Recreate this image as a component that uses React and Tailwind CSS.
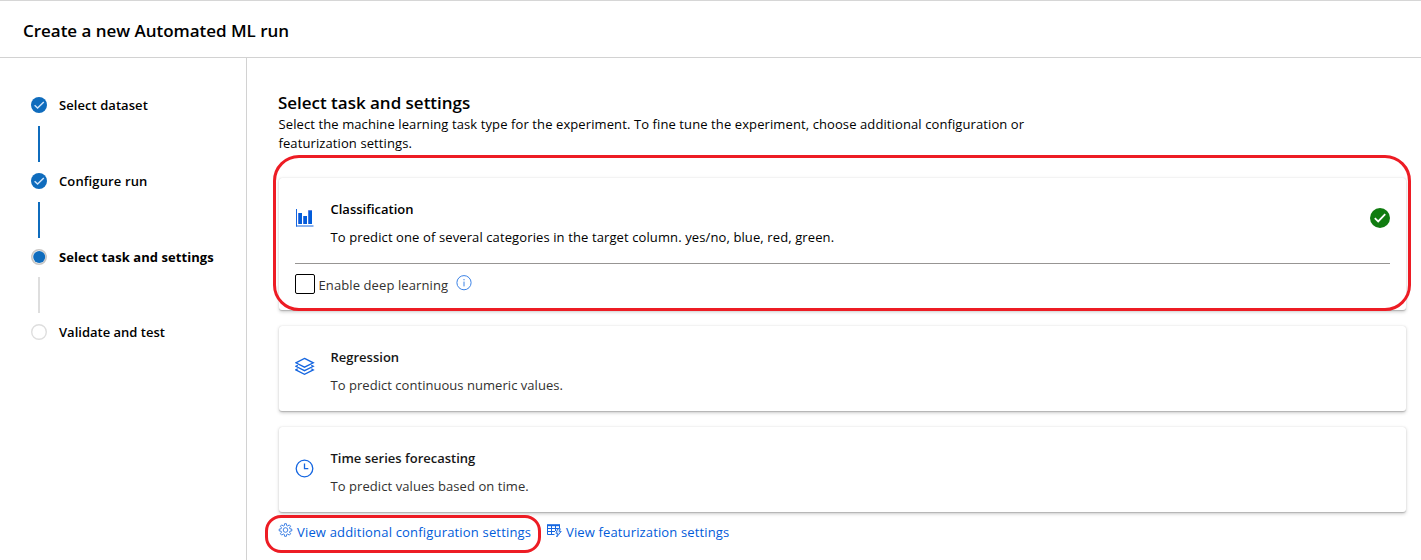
import React from "react";

const RED = "pointer-events-none absolute border-[3px] border-[#ed1c24]";

function StepDone() {
  return (
    <svg className="block h-4 w-4" viewBox="0 0 16 16">
      <circle cx="8" cy="8" r="8" fill="#0f6cbd" />
      <path d="M3.6 8.2 6.6 11 12.8 5" fill="none" stroke="#cfe4fa" strokeWidth="1.5" />
    </svg>
  );
}

function StepCurrent() {
  return (
    <svg className="block h-4 w-4" viewBox="0 0 16 16">
      <circle cx="8" cy="8" r="7.2" fill="#fff" stroke="#c8c6c4" strokeWidth="1.6" />
      <circle cx="8.2" cy="8" r="6" fill="#0f6cbd" />
    </svg>
  );
}

function StepPending() {
  return (
    <svg className="block h-4 w-4" viewBox="0 0 16 16">
      <circle cx="8" cy="8" r="7.3" fill="#fff" stroke="#dedede" strokeWidth="1.4" />
    </svg>
  );
}

function Step({ icon, label, className }) {
  return (
    <div className="flex h-4 items-center gap-3">
      {icon}
      <span className={"whitespace-nowrap text-[13px] leading-4 " + className}>{label}</span>
    </div>
  );
}

function BarsIcon() {
  return (
    <svg className="block h-5 w-5" viewBox="0 0 20 20">
      <path d="M1.5 1v17.5M1 18h17.5" fill="none" stroke="#1566e0" />
      <path d="M3 5h4v11H3zM8 8h4v8H8zM13 2h4v14h-4z" fill="#b7a5e8" />
      <path d="M3.4 5H7v11H3.4zM8.4 8H12v8H8.4zM13.4 2.4H17V16h-3.6z" fill="#015cda" />
    </svg>
  );
}

function LayersIcon() {
  return (
    <svg className="block h-5 w-5" viewBox="0 0 20 20" fill="none" stroke="#1566e0" strokeWidth="1.3">
      <path d="M9.5 1.4 18.3 5.8 9.5 10.2.8 5.8z" />
      <path d="M2.8 8.2.8 9.3l8.7 4.4 8.8-4.4-2-1.1" />
      <path d="M2.8 11.8.8 12.9l8.7 4.4 8.8-4.4-2-1.1" />
    </svg>
  );
}

function ClockIcon() {
  return (
    <svg className="block h-5 w-5" viewBox="0 0 20 20" fill="none" stroke="#1566e0" strokeWidth="1.3">
      <circle cx="9.5" cy="9.5" r="8.3" />
      <path d="M9.5 4.6v5.1h3.8" />
    </svg>
  );
}

function InfoIcon() {
  return (
    <svg className="block h-4 w-4" viewBox="0 0 16 16" fill="none" stroke="#3b82e6">
      <circle cx="8" cy="7.7" r="7.1" />
      <path d="M8 6.6v4.8M8 4v1.3" />
    </svg>
  );
}

function GearIcon() {
  return (
    <svg className="block h-[15px] w-[15px]" viewBox="0 0 15 15" fill="none" stroke="#2a74e2" strokeWidth=".9">
      <path d="M6.3 2.6 6.6.7h1.8l.3 1.9 1 .4 1.6-1.1 1.3 1.3-1.1 1.6.4 1 1.9.3v1.8l-1.9.3-.4 1 1.1 1.6-1.3 1.3-1.6-1.1-1 .4-.3 1.9H6.6l-.3-1.9-1-.4-1.6 1.1-1.3-1.3 1.1-1.6-.4-1L1.2 7.9V6.1l1.9-.3.4-1-1.1-1.6 1.3-1.3L5.3 3z" />
      <circle cx="7.5" cy="7" r="2.3" />
    </svg>
  );
}

function TableFlashIcon() {
  return (
    <svg className="block h-[14px] w-[15px]" viewBox="0 0 15 14" fill="none" stroke="#1566e0">
      <path d="M0 1.2h13" strokeWidth="2" />
      <path d="M.5 1v9.5h7M0 4.5h12.5M0 7.5h8M4.5 1v9.5M8.5 1v6M12.5 1v3.5" />
      <path d="M10.7 4.8h2.6l-1 2.6h1.9l-4.5 5.6 1-3.7H8.9z" strokeWidth=".9" fill="#dbe8fb" />
    </svg>
  );
}

function CheckBadge() {
  return (
    <svg className="block h-5 w-5" viewBox="0 0 20 20">
      <circle cx="10" cy="10" r="10" fill="#107c10" />
      <path d="M4.8 10.2 8.2 13.4 15.2 6.2" fill="none" stroke="#fff" strokeWidth="1.8" />
    </svg>
  );
}

const CARD = "rounded-[3px] bg-white shadow-[0_1.6px_3.6px_rgba(0,0,0,0.2),0_0.3px_0.9px_rgba(0,0,0,0.16)]";

function TaskHead({ icon, iconClass, title, titleClass, text, textClass, selected }) {
  return (
    <div className="flex h-[85px] items-center pl-4 pr-4">
      <div className={"w-9 shrink-0 " + iconClass}>{icon}</div>
      <div className="-ml-[0.5px] flex flex-1 flex-col gap-2 pt-[5px]">
        <div className={"whitespace-nowrap text-[13px] font-semibold leading-5 " + titleClass}>{title}</div>
        <div className={"whitespace-nowrap text-[13px] leading-5 " + textClass}>{text}</div>
      </div>
      {selected && <div className="mt-[-5px]"><CheckBadge /></div>}
    </div>
  );
}

export default function App() {
  return (
    <div className="flex h-[560px] w-[1421px] flex-col overflow-hidden border-t border-[#d6d6d6] bg-white font-['Open_Sans','Noto_Sans',sans-serif] text-[13px] text-black">
      <header className="flex h-[57px] shrink-0 items-center border-b border-[#d2d2d2] pl-[23px]">
        <h1 className="mt-[3px] whitespace-nowrap text-[17px] font-semibold leading-6 tracking-[-0.03px]">Create a new Automated ML run</h1>
      </header>
      <div className="flex flex-1">
        <nav className="flex w-[247px] shrink-0 flex-col border-r border-[#d2d2d2] pl-[31px] pt-[39px]">
          <Step icon={<StepDone />} label="Select dataset" className="font-semibold tracking-[0.06px]" />
          <div className="mb-[11px] ml-[7px] mt-[13px] h-9 w-0.5 bg-[#0f6cbd]" />
          <Step icon={<StepDone />} label="Configure run" className="font-semibold tracking-[0.12px]" />
          <div className="mb-[11px] ml-[7px] mt-[13px] h-9 w-0.5 bg-[#0f6cbd]" />
          <Step icon={<StepCurrent />} label="Select task and settings" className="font-bold tracking-[0.06px]" />
          <div className="mb-[11px] ml-[7px] mt-3 h-9 w-0.5 bg-[#dedede]" />
          <Step icon={<StepPending />} label="Validate and test" className="font-semibold" />
        </nav>
        <main className="flex flex-1 flex-col pl-8 pr-[15px] pt-[33px]">
          <h2 className="-ml-px whitespace-nowrap text-[17px] font-semibold leading-6 tracking-[-0.02px]">Select task and settings</h2>
          <p className="-ml-[0.5px] whitespace-nowrap text-[13px] leading-[19px] tracking-[0.1px]">
            Select the machine learning task type for the experiment. To fine tune the experiment, choose additional configuration or
            <br />
            featurization settings.
          </p>
          <div className="mt-[25px] flex flex-col gap-4">
            <section className={"relative h-[132px] " + CARD}>
              <TaskHead icon={<BarsIcon />} iconClass="mt-[-5px]" title="Classification" titleClass="" text="To predict one of several categories in the target column. yes/no, blue, red, green." textClass="tracking-[0.11px]" selected />
              <div className="mx-4 h-px bg-[#979593]" />
              <div className="flex h-[41px] items-center pl-4">
                <span className="mb-0.5 h-5 w-5 rounded-[2px] border border-black" />
                <span className="ml-[3.5px] whitespace-nowrap leading-5 tracking-[0.1px] text-[#323130]">Enable deep learning</span>
                <span className="mb-1 ml-[7.5px]"><InfoIcon /></span>
              </div>
              <div className={RED + " -left-1.5 -right-[5px] -top-[23px] h-[156px] rounded-[26px]"} />
            </section>
            <section className={CARD}>
              <TaskHead icon={<LayersIcon />} iconClass="-mt-1" title="Regression" titleClass="text-[#171717]" text="To predict continuous numeric values." textClass="text-[#323130] tracking-[0.04px]" />
            </section>
            <section className={CARD}>
              <TaskHead icon={<ClockIcon />} iconClass="-mt-px" title="Time series forecasting" titleClass="text-[#171717]" text="To predict values based on time." textClass="text-[#323130] tracking-[0.07px]" />
            </section>
          </div>
          <div className="-ml-px mt-2.5 flex items-center text-[#015cda]">
            <a className="relative flex w-[269px] items-center gap-1">
              <span className="mb-1"><GearIcon /></span>
              <span className="whitespace-nowrap leading-5 tracking-[0.18px]">View additional configuration settings</span>
              <span className={RED + " -left-[13px] -top-[7px] h-[38px] w-[276px] rounded-[16px]"} />
            </a>
            <a className="flex items-center gap-1">
              <span className="mb-[3px]"><TableFlashIcon /></span>
              <span className="whitespace-nowrap leading-5 tracking-[0.14px]">View featurization settings</span>
            </a>
          </div>
        </main>
      </div>
    </div>
  );
}
